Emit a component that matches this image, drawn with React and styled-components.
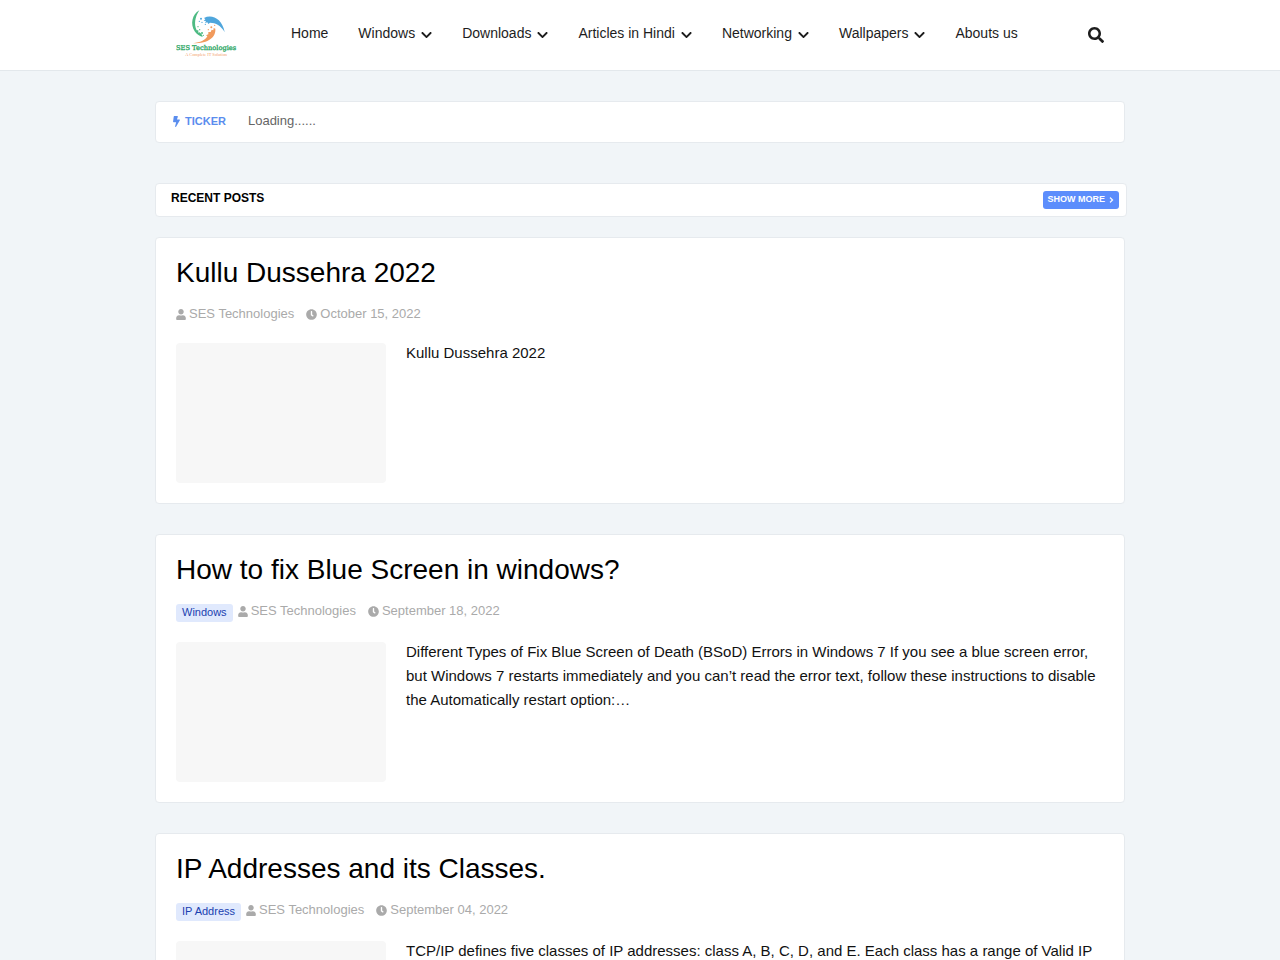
import React from "react";
import styled, { createGlobalStyle } from "styled-components";
import {
  FaBolt,
  FaChevronDown,
  FaChevronRight,
  FaClock,
  FaSearch,
  FaUser
} from "react-icons/fa";

const GlobalStyle = createGlobalStyle`
  * {
    box-sizing: border-box;
  }

  body {
    margin: 0;
    background: #f1f5f8;
    color: #1d1d1d;
    font-family: "Liberation Sans", Arial, sans-serif;
    font-size: 14px;
  }

  a {
    color: inherit;
    text-decoration: none;
  }
`;

const StyledHeader = styled.header`
  background: #ffffff;
  border-bottom: 1px solid #e3e8ec;
`;

const HeaderRow = styled.div`
  display: flex;
  align-items: center;
  max-width: 970px;
  height: 70px;
  margin: 0 auto;
  padding: 0 21px;
`;

const LogoLink = styled.a`
  display: flex;
  margin-right: 54px;
  padding-bottom: 4px;
`;

const Nav = styled.nav`
  display: flex;
  flex: 1;
  gap: 30px;
  padding-bottom: 4px;
`;

const NavLink = styled.a`
  display: flex;
  align-items: center;
  line-height: 20px;
  white-space: nowrap;

  svg {
    width: 11px;
    height: 12px;
    margin: 4px 0 0 6px;
  }
`;

const SearchButton = styled.button`
  display: flex;
  padding: 0;
  border: 0;
  background: none;
  color: #1d1d1d;
  font-size: 16px;
  cursor: pointer;
`;

const Main = styled.main`
  max-width: 970px;
  margin: 0 auto;
  padding: 30px 0;
`;

const Panel = styled.section`
  background: #ffffff;
  border: 1px solid #e6eaee;
  border-radius: 4px;
`;

const Ticker = styled(Panel)`
  display: flex;
  align-items: center;
  height: 42px;
  margin-bottom: 40px;
  padding: 0 17px 2px;
`;

const TickerTitle = styled.h2`
  display: flex;
  align-items: center;
  gap: 5px;
  margin: 0 22px 0 0;
  color: #5a8dee;
  font-size: 11px;
  line-height: 16px;

  svg {
    width: 7px;
  }
`;

const TickerText = styled.span`
  color: #656565;
  font-size: 13px;
  line-height: 18px;
`;

const SectionHead = styled(Panel)`
  display: flex;
  justify-content: space-between;
  margin: 0 -2px 20px 0;
  padding: 7px 7px 7px 15px;

  h2 {
    margin: 0;
    color: #000000;
    font-size: 12px;
    line-height: 14px;
  }
`;

const ShowMore = styled.a`
  display: flex;
  align-items: center;
  gap: 4px;
  height: 18px;
  padding: 0 5px 2px;
  border-radius: 3px;
  background: #5c8dfc;
  && {
    color: #ffffff;
  }
  font-size: 9px;
  font-weight: bold;
  line-height: 16px;

  svg {
    width: 5px;
    height: 6px;
    margin-top: 2px;
    stroke: currentColor;
    stroke-width: 40px;
  }
`;

const PostCard = styled(Panel).attrs({ as: "article" })`
  margin-bottom: 30px;
  padding: 20px;
`;

const PostTitle = styled.h2`
  margin: 0 0 16px;
  color: #000000;
  font-size: 28px;
  font-weight: normal;
  line-height: 30px;
`;

const PostMeta = styled.div`
  display: flex;
  align-items: flex-start;
  margin-bottom: 20px;
  color: #aaaaaa;
  font-size: 13px;
  line-height: 19px;
`;

const Tag = styled.a`
  margin: 3px 5px 0 0;
  padding: 0 6px 2px;
  border-radius: 3px;
  background: #e0e9fd;
  && {
    color: #1a3fb0;
  }
  font-size: 11px;
  line-height: 16px;
`;

const MetaItem = styled.span`
  display: flex;
  align-items: center;
  gap: 3px;
  margin-right: 12px;

  svg {
    width: ${props => props.$icon}px;
    height: 11px;
    margin-top: 1px;
  }
`;

const PostBody = styled.div`
  display: flex;
  gap: 20px;
`;

const Thumbnail = styled.a`
  flex: none;
  width: 210px;
  height: 140px;
  border-radius: 4px;
  background: #f7f7f7;
`;

const Snippet = styled.p`
  margin: -2px 0 0;
  color: #111111;
  font-size: 15px;
  line-height: 24px;
`;

const menu = [
  { label: "Home" },
  { label: "Windows", sub: true },
  { label: "Downloads", sub: true },
  { label: "Articles in Hindi", sub: true },
  { label: "Networking", sub: true },
  { label: "Wallpapers", sub: true },
  { label: "Abouts us" }
];

const posts = [
  {
    title: "Kullu Dussehra 2022",
    date: "October 15, 2022",
    text: "Kullu Dussehra 2022"
  },
  {
    title: "How to fix Blue Screen in windows?",
    tag: "Windows",
    date: "September 18, 2022",
    text:
      "Different Types of Fix Blue Screen of Death (BSoD) Errors in Windows 7 If you see a blue screen error, but Windows 7 restarts immediately and you can’t read the error text, follow these instructions to disable the Automatically restart option:…"
  },
  {
    title: "IP Addresses and its Classes.",
    tag: "IP Address",
    date: "September 04, 2022",
    text:
      "TCP/IP defines five classes of IP addresses: class A, B, C, D, and E. Each class has a range of Valid IP"
  }
];

const Logo = () => (
  <svg width="61" height="51" viewBox="0 0 183 153" role="img" aria-label="SES Technologies">
    <path d="M70 7C48 20 42 48 56 70c6 9 13 14 24 17-1-6-5-10-9-14l-4 1 0-7-5 0C54 50 56 28 70 7z" fill="#4dba83" />
    <path d="M84 30C108 18 138 32 146 72c-12-19-26-28-44-28l-5 4-3-5-7 2 3-6-7-1 5-4z" fill="#4fa6dc" />
    <path d="M118 62c2 24-18 44-67 44 22-3 36-9 43-21l-4-3 7-3 0-7 7 0 3-7 5 2 1-7z" fill="#f19a5c" />
    <g fill="#4dba83">
      <circle cx="71" cy="65" r="2" />
      <circle cx="78" cy="75" r="3" />
      <circle cx="66" cy="56" r="2" />
      <circle cx="82" cy="82" r="2" />
    </g>
    <g fill="#4fa6dc">
      <circle cx="75" cy="32" r="3" />
      <circle cx="78" cy="43" r="2" />
      <circle cx="70" cy="40" r="2" />
      <circle cx="88" cy="49" r="2" />
    </g>
    <g fill="#f19a5c">
      <circle cx="106" cy="58" r="3" />
      <circle cx="116" cy="52" r="2" />
      <circle cx="97" cy="65" r="2" />
    </g>
    <text x="0" y="127" fill="#2fa866" stroke="#2fa866" fontFamily="DejaVu Serif, serif" fontSize="20">
      SES Technologies
    </text>
    <text x="28" y="145" fill="#f3a06a" fontFamily="Liberation Serif, serif" fontSize="13">
      A Complete IT Solution
    </text>
  </svg>
);

const Header = () => (
  <StyledHeader>
    <HeaderRow>
      <LogoLink href="#">
        <Logo />
      </LogoLink>
      <Nav>
        {menu.map(item => (
          <NavLink href="#" key={item.label}>
            {item.label}
            {item.sub && <FaChevronDown />}
          </NavLink>
        ))}
      </Nav>
      <SearchButton aria-label="Search">
        <FaSearch />
      </SearchButton>
    </HeaderRow>
  </StyledHeader>
);

const Post = ({ title, tag, date, text }) => (
  <PostCard>
    <PostTitle>
      <a href="#">{title}</a>
    </PostTitle>
    <PostMeta>
      {tag && <Tag href="#">{tag}</Tag>}
      <MetaItem $icon={10}>
        <FaUser />
        SES Technologies
      </MetaItem>
      <MetaItem $icon={11}>
        <FaClock />
        {date}
      </MetaItem>
    </PostMeta>
    <PostBody>
      <Thumbnail href="#" aria-label={title} />
      <Snippet>{text}</Snippet>
    </PostBody>
  </PostCard>
);

const App = () => (
  <>
    <GlobalStyle />
    <Header />
    <Main>
      <Ticker>
        <TickerTitle>
          <FaBolt />
          TICKER
        </TickerTitle>
        <TickerText>Loading......</TickerText>
      </Ticker>
      <SectionHead>
        <h2>RECENT POSTS</h2>
        <ShowMore href="#">
          SHOW MORE
          <FaChevronRight />
        </ShowMore>
      </SectionHead>
      {posts.map(post => (
        <Post key={post.title} {...post} />
      ))}
    </Main>
  </>
);

export default App;
